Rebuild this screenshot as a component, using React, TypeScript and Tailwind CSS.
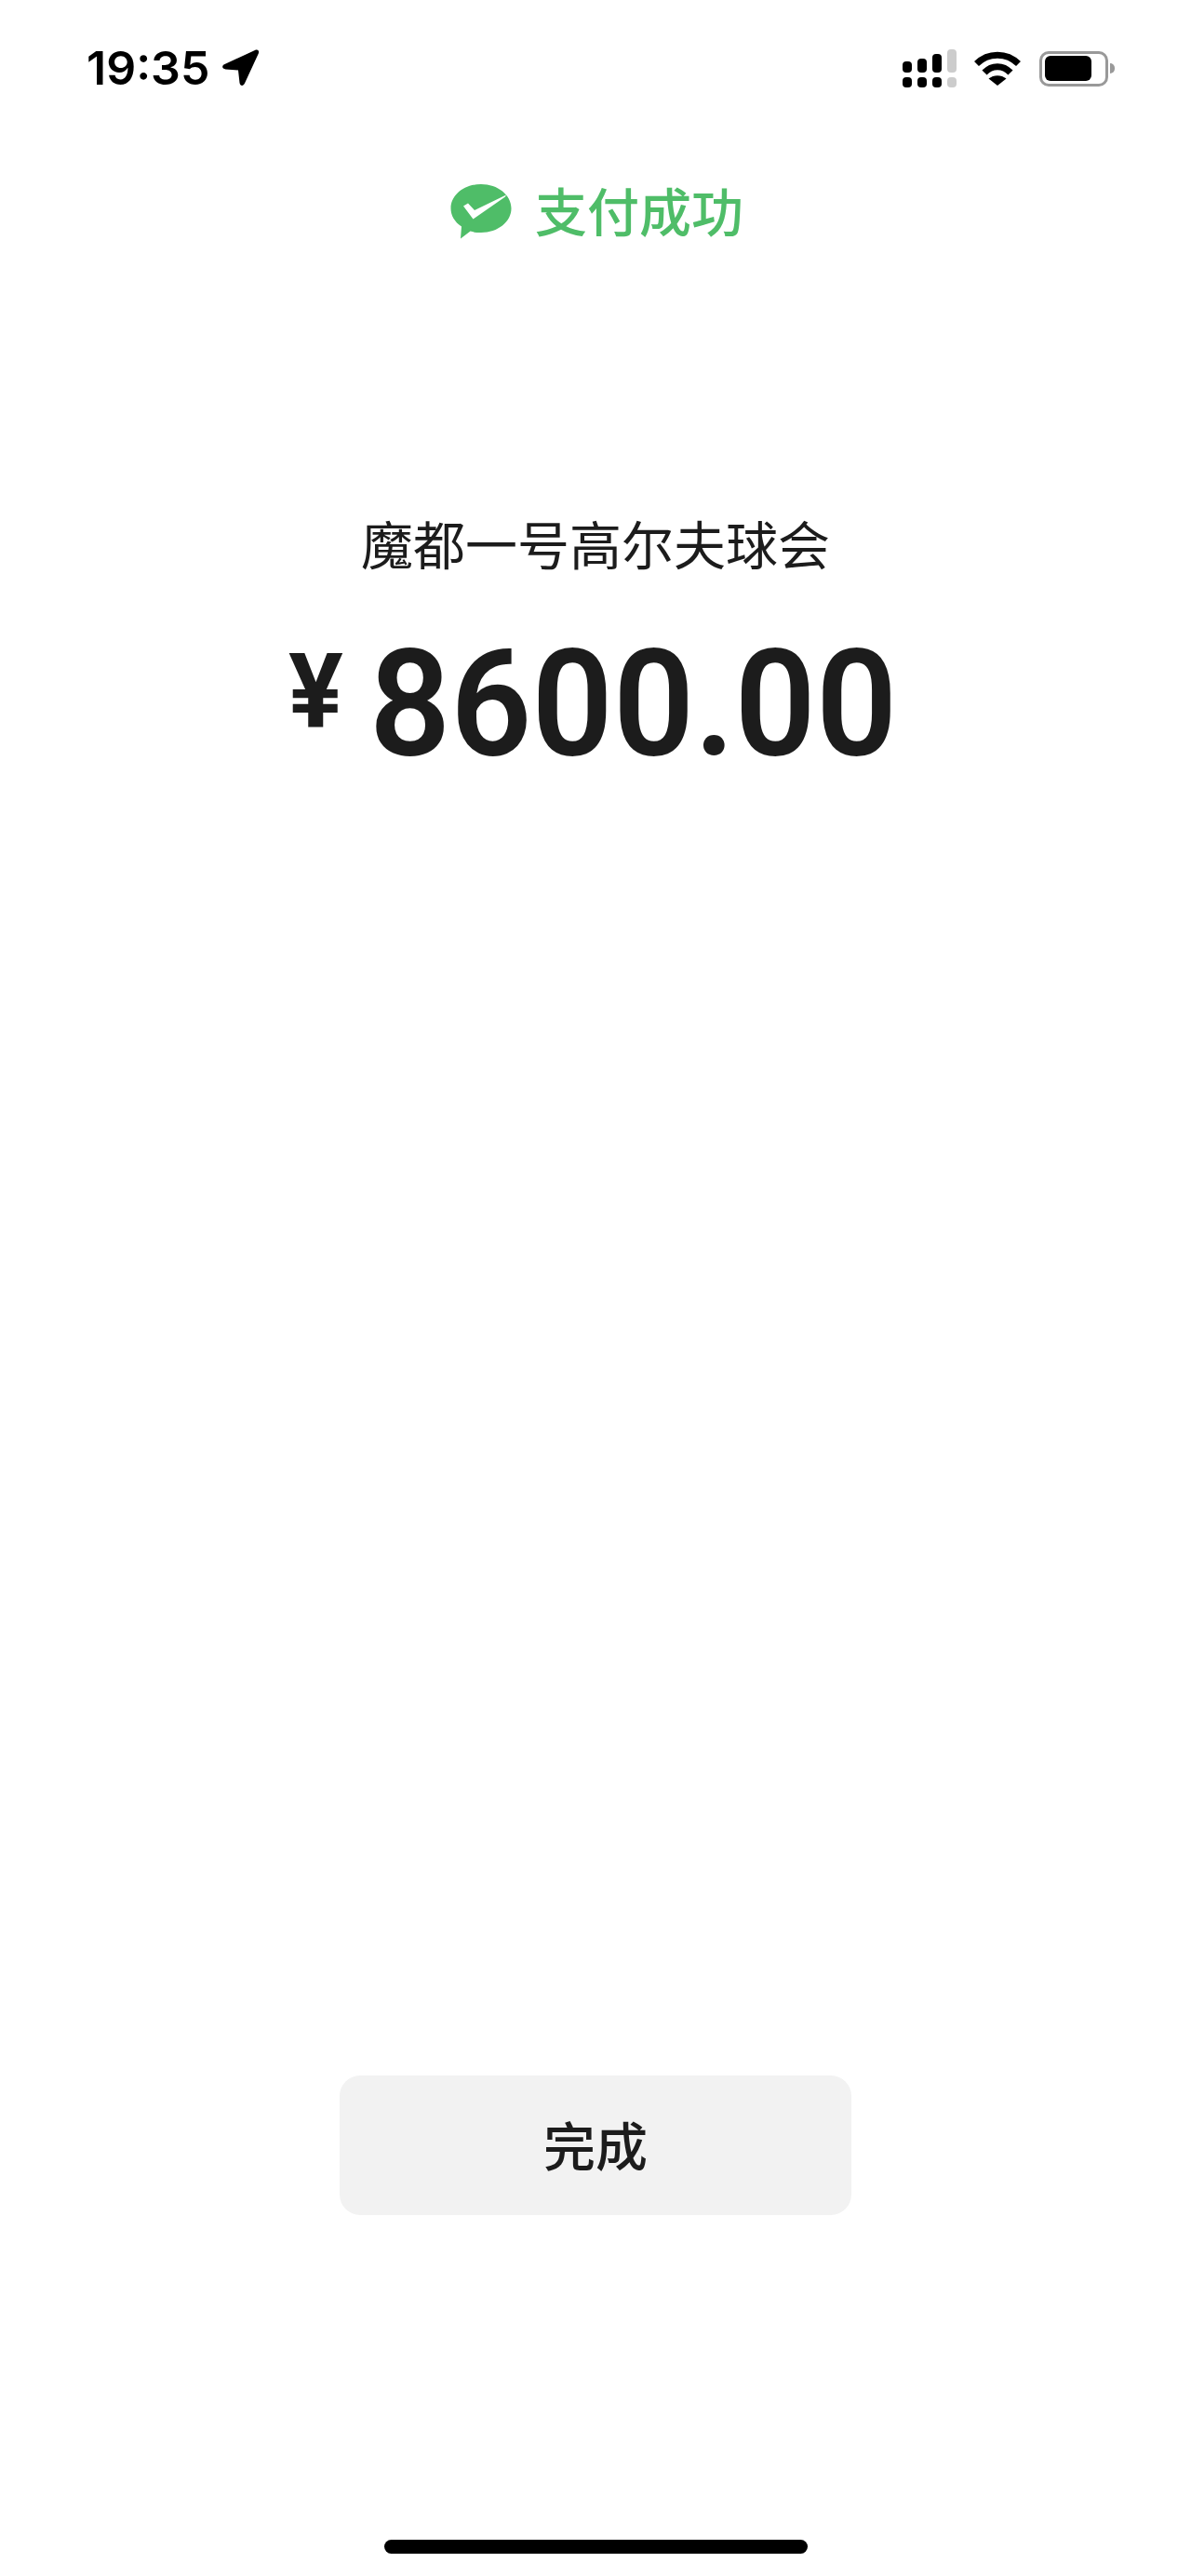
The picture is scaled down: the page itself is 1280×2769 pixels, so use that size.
const WeChatPayIcon = () => (
  <svg width="66" height="59" viewBox="0 0 66 59">
    <path
      d="M33 0C51 0 65.500 11.500 65.500 26C65.500 40.500 51 52 33 52C28.500 52 25 51.500 21.500 50.500L11 58.500L12 45.500C4.500 40.500 0.500 33.500 0.500 26C0.500 11.500 15 0 33 0Z"
      fill="#4fbd68"
    />
    <path d="M14 23.500L19 20.500L26 28L60 11.500L59 13.500L24.500 37.500Z" fill="#ffffff" />
  </svg>
);

const LocationArrow = () => (
  <svg width="40" height="40" viewBox="0 0 40 40">
    <path
      d="M35 1C38 -0.500 40 1.500 38.800 4.500L24 36.500C22.500 40 19 39.500 18.500 36L17 22.500L3.500 21.500C-0.500 21 -1 17.500 2.500 16Z"
      fill="#000000"
    />
  </svg>
);

const SignalDots = () => {
  const bars = [
    { top: 13, height: 12, color: '#000000' },
    { top: 10, height: 15, color: '#000000' },
    { top: 5, height: 20, color: '#000000' },
    { top: 0, height: 25, color: '#cccccc' },
  ];
  return (
    <svg width="58" height="41" viewBox="0 0 58 41">
      {bars.map((b, i) => (
        <g key={i} fill={b.color}>
          <rect x={i * 16} y={b.top} width="10" height={b.height} rx="4" />
          <rect x={i * 16} y="30" width="10" height="11" rx="4" />
        </g>
      ))}
    </svg>
  );
};

const WifiIcon = () => (
  <svg width="50" height="37" viewBox="0 0 50 37">
    <path d="M2.500 13.500C15 1 35 1 47.500 13.500" fill="none" stroke="#000000" strokeWidth="7" />
    <path d="M11 23C19 14.500 31 14.500 39 23" fill="none" stroke="#000000" strokeWidth="7" />
    <path d="M15.500 29.500C21 25 29 25 34.500 29.500L25 37Z" fill="#000000" />
  </svg>
);

const BatteryIcon = () => (
  <div className="flex items-center">
    <div className="flex h-[38px] w-[74px] items-center rounded-[10px] border-[3px] border-[#999999] pl-[3px]">
      <div className="h-[27px] w-[50px] rounded-[6px] bg-black" />
    </div>
    <div className="ml-[2px] h-[11px] w-[5px] rounded-r-full bg-[#999999]" />
  </div>
);

export default function App() {
  return (
    <div className="flex h-[2769px] w-full flex-col items-center bg-white font-['Noto_Sans_CJK_SC',sans-serif] text-[#1c1c1c]">
      <div className="flex h-[106px] w-full items-start justify-between pl-[93px] pr-[82px] pt-[53px]">
        <div className="flex items-center">
          <span className="font-['Inter',sans-serif] text-[50px] font-semibold leading-[40px] text-black">19:35</span>
          <span className="ml-[14px] flex">
            <LocationArrow />
          </span>
        </div>
        <div className="flex items-center">
          <SignalDots />
          <span className="ml-[19px] flex">
            <WifiIcon />
          </span>
          <span className="ml-[20px] flex">
            <BatteryIcon />
          </span>
        </div>
      </div>

      <div className="mt-[92px] flex items-center pl-[3px]">
        <WeChatPayIcon />
        <span className="ml-[25px] -translate-y-[3px] text-[56px] font-medium leading-[59px] text-[#4fbd68]">支付成功</span>
      </div>

      <div className="mt-[284px] text-[56px] leading-[84px]">魔都一号高尔夫球会</div>

      <div className="ml-[310px] mt-[52px] flex w-[704px] items-start self-start">
        <span className="mt-[10px] block w-[87px] shrink-0 origin-left scale-x-[0.98] font-['Roboto',sans-serif] text-[112px] font-bold leading-[112px]">¥</span>
        <span className="block origin-left scale-x-[0.955] whitespace-nowrap font-['Roboto',sans-serif] text-[160px] font-semibold leading-[160px]">
          8600.00
        </span>
      </div>

      <div className="flex-1" />

      <button className="flex h-[150px] w-[550px] items-center justify-center rounded-[22px] bg-[#f2f2f2] pb-[4px] text-[56px] font-medium text-[#1c1c1c]">
        完成
      </button>

      <div className="mb-[24px] mt-[349px] h-[15px] w-[455px] rounded-full bg-black" />
    </div>
  );
}
